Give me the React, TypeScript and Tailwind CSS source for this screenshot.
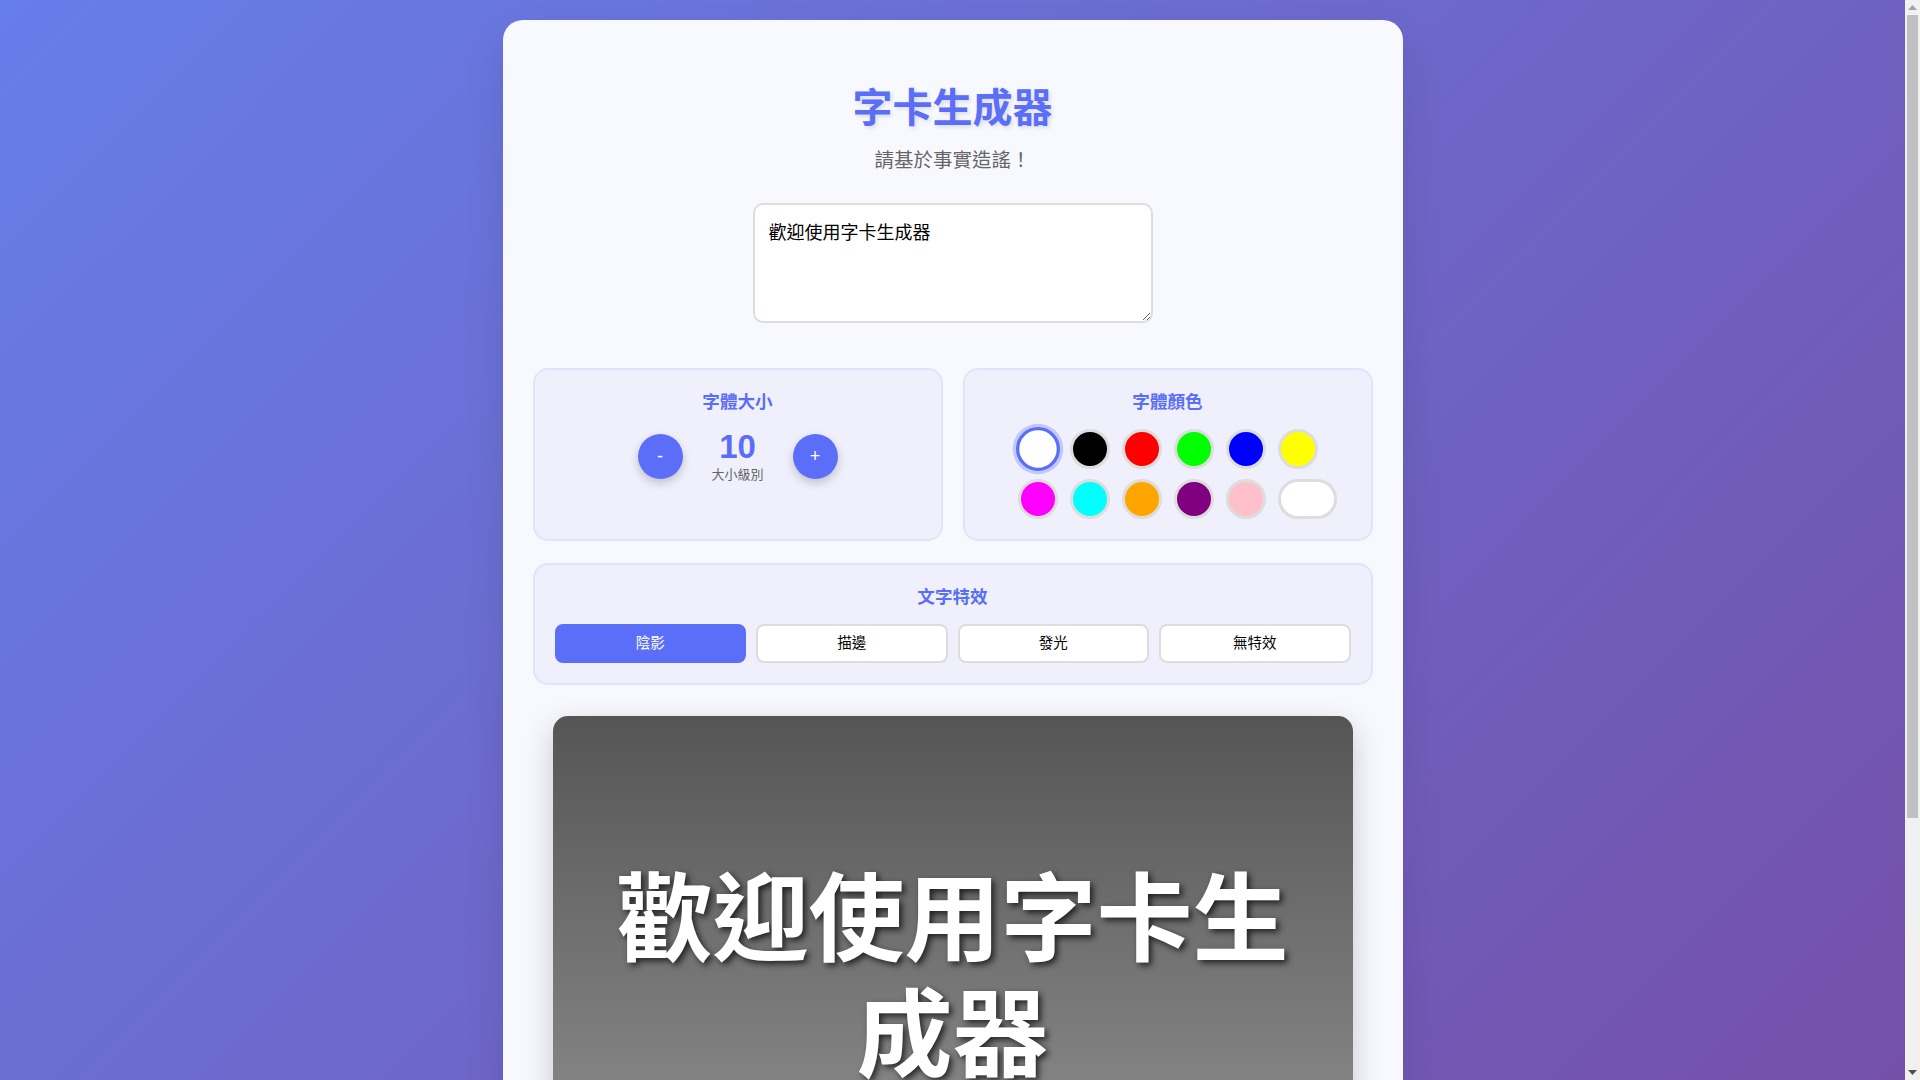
import React, { useState } from "react";

const FONT = { fontFamily: '"Liberation Sans", "Noto Sans CJK TC", sans-serif' };

const colors = [
  "#ffffff", "#000000", "#ff0000", "#00ff00", "#0000ff", "#ffff00",
  "#ff00ff", "#00ffff", "#ffa500", "#800080", "#ffc0cb",
];

function Scrollbar() {
  return (
    <div className="flex h-screen w-[15px] shrink-0 flex-col items-center bg-[#f1f1f1]">
      <div className="flex h-[15px] w-full items-center justify-center">
        <svg width="9" height="5" viewBox="0 0 9 5">
          <polygon points="4.5,0 9,5 0,5" fill="#a3a3a3" />
        </svg>
      </div>
      <div className="h-[803px] w-[11px] bg-[#c1c1c1]" />
      <div className="flex-1" />
      <div className="flex h-[15px] w-full items-center justify-center">
        <svg width="9" height="5" viewBox="0 0 9 5">
          <polygon points="0,0 9,0 4.5,5" fill="#505050" />
        </svg>
      </div>
    </div>
  );
}

export default function App() {
  const [text, setText] = useState("歡迎使用字卡生成器");
  const [size, setSize] = useState(10);
  const [color, setColor] = useState("#ffffff");
  const [effect, setEffect] = useState("陰影");
  const effects = ["陰影", "描邊", "發光", "無特效"];

  return (
    <div className="flex h-screen w-full overflow-hidden" style={FONT}>
      <div className="h-screen flex-1 overflow-hidden">
        <div className="min-h-full w-full bg-[linear-gradient(135deg,#667eea_0%,#764ba2_100%)] px-[20px] pt-[20px] pb-[20px]">
          <div className="mx-auto w-[900px] rounded-[20px] bg-[#f8f9ff] px-[30px] pt-[64px] pb-[30px] shadow-[0_20px_40px_rgba(0,0,0,0.1)]">
            <h1 className="text-center text-[40px] leading-[48px] font-bold text-[#5b6ef7] [text-shadow:2px_2px_4px_rgba(0,0,0,0.12)]">
              字卡生成器
            </h1>
            <p className="mt-[14px] text-center text-[19.5px] leading-[29px] text-[#666]">
              請基於事實造謠！
            </p>

            <div className="mt-[28px] flex justify-center">
              <textarea
                value={text}
                onChange={(e) => setText(e.target.value)}
                className="h-[120px] w-[400px] resize-y rounded-[10px] border-2 border-[#dddddd] bg-white px-[14px] pt-[15px] pb-[13px] text-[18px] leading-[26px] text-black outline-none"
                style={FONT}
              />
            </div>

            <div className="mt-[45px] grid grid-cols-2 gap-[20px]">
              <div className="rounded-[15px] border-2 border-[#e0e4fb] bg-[#eff0fc] p-[20px]">
                <div className="mb-[15px] text-center text-[17.6px] leading-[24px] font-bold text-[#5b6ef7]">
                  字體大小
                </div>
                <div className="flex items-center justify-center gap-[15px]">
                  <button
                    onClick={() => setSize(Math.max(1, size - 1))}
                    className="flex h-[45px] w-[45px] items-center justify-center rounded-full bg-[#5b6ef7] text-[18px] text-white shadow-[0_4px_10px_rgba(0,0,0,0.2)]"
                  >
                    -
                  </button>
                  <div className="flex w-[80px] flex-col items-center">
                    <div className="text-[33px] leading-[36px] font-bold text-[#5b6ef7]">{size}</div>
                    <div className="mt-[1px] text-[13px] leading-[18px] text-[#666]">大小級別</div>
                  </div>
                  <button
                    onClick={() => setSize(size + 1)}
                    className="flex h-[45px] w-[45px] items-center justify-center rounded-full bg-[#5b6ef7] text-[18px] text-white shadow-[0_4px_10px_rgba(0,0,0,0.2)]"
                  >
                    +
                  </button>
                </div>
              </div>

              <div className="rounded-[15px] border-2 border-[#e0e4fb] bg-[#eff0fc] p-[20px]">
                <div className="mb-[15px] text-center text-[17.6px] leading-[24px] font-bold text-[#5b6ef7]">
                  字體顏色
                </div>
                <div className="grid grid-cols-[repeat(6,40px)] justify-center gap-x-[12px] gap-y-[10px]">
                  {colors.map((c) => (
                    <button
                      key={c}
                      onClick={() => setColor(c)}
                      className={
                        c === color
                          ? "h-[40px] w-[40px] scale-110 rounded-full border-[3px] border-[#5b6ef7] shadow-[0_0_0_3px_rgba(91,110,247,0.3)]"
                          : "h-[40px] w-[40px] rounded-full border-[3px] border-[#dddddd]"
                      }
                      style={{ backgroundColor: c }}
                    />
                  ))}
                  <button className="h-[40px] w-[59px] rounded-full border-[3px] border-[#dddddd] bg-white" />
                </div>
              </div>
            </div>

            <div className="mt-[22px] rounded-[15px] border-2 border-[#e0e4fb] bg-[#eff0fc] p-[20px]">
              <div className="mb-[15px] text-center text-[17.6px] leading-[24px] font-bold text-[#5b6ef7]">
                文字特效
              </div>
              <div className="grid grid-cols-4 gap-[10px]">
                {effects.map((e) => (
                  <button
                    key={e}
                    onClick={() => setEffect(e)}
                    className={
                      e === effect
                        ? "rounded-[8px] border-2 border-[#5b6ef7] bg-[#5b6ef7] py-[7px] text-[14.5px] leading-[21px] text-white"
                        : "rounded-[8px] border-2 border-[#dddddd] bg-white py-[7px] text-[14.5px] leading-[21px] text-black"
                    }
                  >
                    {e}
                  </button>
                ))}
              </div>
            </div>

            <div className="mx-auto mt-[31px] mb-[124px] flex h-[523px] w-[800px] items-center justify-center rounded-[15px] bg-[linear-gradient(180deg,#555555_0%,#969696_100%)] px-[40px] shadow-[0_10px_30px_rgba(0,0,0,0.2)]">
              <div
                className="text-center text-[96px] leading-[116px] font-bold text-white [text-shadow:3px_3px_6px_rgba(0,0,0,0.7)]"
                style={{ color }}
              >
                {text}
              </div>
            </div>
          </div>
        </div>
      </div>
      <Scrollbar />
    </div>
  );
}
